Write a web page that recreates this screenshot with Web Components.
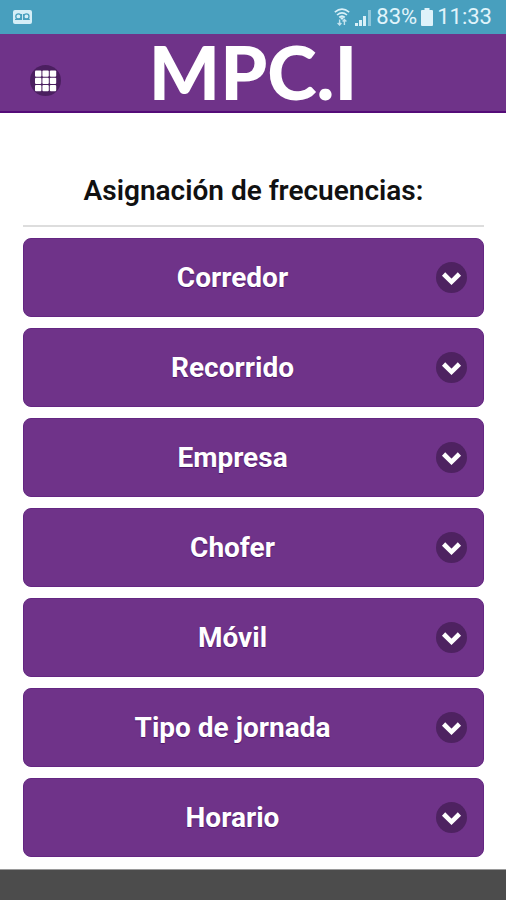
<!DOCTYPE html>
<html lang="es">
<head>
<meta charset="utf-8">
<meta name="viewport" content="width=device-width, initial-scale=1">
<title>MPC.I</title>
<style>
html { height: 100%; }
body { margin: 0; min-height: 100%; display: flex; flex-direction: column; background: #4c4c4c; font-family: Roboto, "Liberation Sans", sans-serif; }
assignment-form { border-bottom: 1px solid #9a9a9a; }
</style>
</head>
<body>
<status-bar></status-bar>
<app-header>MPC.I</app-header>
<assignment-form>
  <span slot="title">Asignación de frecuencias:</span>
  <select-field label="Corredor"></select-field>
  <select-field label="Recorrido"></select-field>
  <select-field label="Empresa"></select-field>
  <select-field label="Chofer"></select-field>
  <select-field label="Móvil"></select-field>
  <select-field label="Tipo de jornada"></select-field>
  <select-field label="Horario"></select-field>
</assignment-form>

<template id="status-bar">
<style>
:host { display: flex; align-items: center; height: 34px; padding: 0 14px 0 12px; background: #489fbe; color: #e0f4fb; font-size: 22px; line-height: 36px; }
svg { display: block; flex: none; }
.right { margin-left: auto; display: flex; align-items: center; gap: 4px; }
</style>
<svg width="20" height="14" viewBox="0 0 20 14" aria-hidden="true">
  <rect x="1" width="19" height="14" rx="2" fill="#d5eef7"/>
  <g fill="none" stroke="#489fbe" stroke-width="1.3"><circle cx="6.4" cy="6.4" r="2.6"/><circle cx="14.4" cy="6.4" r="2.6"/><path d="M3 9.4H9.4V4M11.6 4V9.4H17.8"/></g>
</svg>
<div class="right">
  <svg width="16" height="18" viewBox="0 0 16 18" aria-hidden="true">
    <g fill="none" stroke="#d9f0f8" stroke-width="1.6"><path d="M.8 4.2Q8-1.8 15.2 4.2"/><path d="M3 7Q8 2.6 13 7"/><path d="M5.2 9.4Q8 6.8 10.8 9.4"/></g>
    <path d="M5.5 9.2H10.5L8 12Z" fill="#d9f0f8"/>
    <path d="M5.6 11.5V17M3.6 15L5.6 17L7.4 15M10.4 17V11.5M8.6 13.4L10.4 11.5L12.4 13.4" fill="none" stroke="#c3e3ef" stroke-width="1.4"/>
  </svg>
  <svg width="18" height="17" viewBox="0 0 18 17" aria-hidden="true">
    <path d="M1 14H4V17H1ZM5 11H8V17H5ZM9 7H12V17H9Z" fill="#d9f0f8"/><path d="M14 1H17V17H14Z" fill="#8fc6da"/>
  </svg>
  <span>83%</span>
  <svg width="12" height="18" viewBox="0 0 12 18" aria-hidden="true"><path d="M3.5 0H8.5V2H11Q12 2 12 3V17Q12 18 11 18H1Q0 18 0 17V3Q0 2 1 2H3.5Z" fill="#def2fa"/></svg>
  <span>11:33</span>
</div>
</template>

<template id="app-header">
<style>
:host { display: grid; grid-template-columns: 1fr auto 1fr; height: 77px; background: #6f3389; border-bottom: 2px solid #540b78; color: #fff; }
button { align-self: end; margin: 0 0 15px 30px; width: 31px; height: 31px; padding: 0; border: 0; border-radius: 50%; background: #4b1f60; cursor: pointer; }
svg { display: block; }
h1 { margin: 0; font: 900 75px/74px Lato, "Open Sans", sans-serif; }
</style>
<button type="button" aria-label="Menú">
  <svg width="31" height="31" viewBox="0 0 31 31" fill="#fff" aria-hidden="true">
    <g id="r"><rect x="5" y="5.5" width="6.4" height="6.2" rx="1"/><rect x="12.4" y="5.5" width="6.4" height="6.2" rx="1"/><rect x="19.8" y="5.5" width="6.4" height="6.2" rx="1"/></g>
    <use href="#r" y="7.3"/><use href="#r" y="14.6"/>
  </svg>
</button>
<h1><slot></slot></h1>
</template>

<template id="assignment-form">
<style>
:host { display: block; background: #fff; }
form { padding: 49px 22px 12px 23px; }
h2 { margin: 0 0 11px; padding: 12px 0 17px; border-bottom: 2px solid #ddd; color: #111; text-align: center; font-size: 28px; line-height: 34px; font-weight: 600; }
.fields { display: grid; gap: 11px; }
</style>
<form>
  <h2><slot name="title"></slot></h2>
  <div class="fields"><slot></slot></div>
</form>
</template>

<template id="select-field">
<style>
:host { display: grid; align-items: center; }
select, svg { grid-area: 1 / 1; }
select { appearance: none; width: 100%; height: 79px; margin: 0; padding: 0 42px 0 0; border: 1px solid #642682; border-radius: 8px; background: #6f3389; color: #fff; font-family: inherit; font-size: 28px; line-height: 34px; font-weight: 700; text-align: center; text-align-last: center; text-shadow: 0 1px 1px #4c1468; cursor: pointer; }
svg { justify-self: end; margin-right: 17px; pointer-events: none; z-index: 1; }
</style>
<select></select>
<svg width="31" height="31" viewBox="0 0 31 31" aria-hidden="true">
  <circle cx="15.5" cy="15.5" r="15.5" fill="#4e2261"/>
  <path d="M7.6 12L15.5 19.8L23.4 12" fill="none" stroke="#fff" stroke-width="4.6"/>
</svg>
</template>

<script>
class TemplateElement extends HTMLElement {
  constructor() {
    super();
    this.attachShadow({ mode: "open" }).append(document.getElementById(this.localName).content.cloneNode(true));
  }
}
class StatusBar extends TemplateElement {}
class AppHeader extends TemplateElement {}
class AssignmentForm extends TemplateElement {}
class SelectField extends TemplateElement {
  connectedCallback() {
    const label = this.getAttribute("label");
    const select = this.shadowRoot.querySelector("select");
    select.setAttribute("aria-label", label);
    select.replaceChildren(new Option(label, ""));
  }
}
customElements.define("status-bar", StatusBar);
customElements.define("app-header", AppHeader);
customElements.define("assignment-form", AssignmentForm);
customElements.define("select-field", SelectField);
</script>
</body>
</html>
